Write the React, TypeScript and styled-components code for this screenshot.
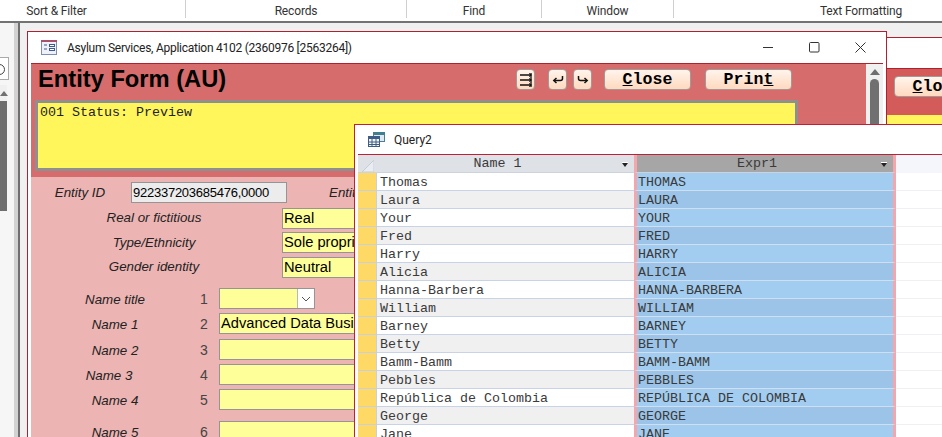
import styled, { createGlobalStyle } from "styled-components";

const GlobalStyle = createGlobalStyle`
  html, body {
    margin: 0;
    padding: 0;
    background: #f1f1f1;
  }
`;

const SANS = `"Liberation Sans", Arial, sans-serif`;
const MONO = `"Liberation Mono", "Courier New", monospace`;
const UI = `Roboto, "Open Sans", sans-serif`;

const Page = styled.div`
  position: relative;
  width: 942px;
  height: 437px;
  overflow: hidden;
  background: #f0f0f0;
  display: flex;
  flex-direction: column;
`;

const Ribbon = styled.div`
  display: flex;
  flex: none;
  height: 21px;
  margin-left: -72px;
  background: #fff;
  border-bottom: 2px solid #737373;
  width: 1200px;
`;

const RibbonGroup = styled.div<{ $w: number }>`
  width: ${(p) => p.$w}px;
  flex: none;
  height: 15px;
  padding-top: 3px;
  box-sizing: content-box;
  border-right: 1px solid #cfcfcf;
  text-align: center;
  font: 12px/17px ${UI};
  letter-spacing: -0.15px;
  color: #333;
`;

const Workspace = styled.div`
  flex: 1;
  display: flex;
  min-height: 0;
`;

const NavPane = styled.div`
  width: 14px;
  flex: none;
  background: #f6f6f6;
  display: flex;
  flex-direction: column;
  padding-top: 34px;
`;

const NavSearch = styled.div`
  width: 9px;
  height: 23px;
  box-sizing: border-box;
  background: #fff;
  border: 1px solid #a9a9a9;
  border-left: none;
  position: relative;
  overflow: hidden;

  &::after {
    content: "";
    position: absolute;
    left: -6px;
    top: 6px;
    width: 9px;
    height: 9px;
    border: 1px solid #444;
    border-radius: 50%;
  }
`;

const NavScroll = styled.div`
  width: 7px;
  margin-top: 5px;
  display: flex;
  flex-direction: column;
  align-items: stretch;
`;

const NavArrow = styled.div`
  height: 16px;
  display: flex;
  align-items: center;
  justify-content: center;
  background: #f0f0f0;

  &::before {
    content: "";
    border: 4px solid transparent;
    border-top: none;
    border-bottom: 5px solid #707070;
  }
`;

const NavThumb = styled.div`
  height: 110px;
  background: #6e6e6e;
`;

const NavEdge = styled.div`
  flex: none;
  width: 4px;
  background: #d2d2d2;
`;

const NavRule = styled.div`
  flex: none;
  width: 2px;
  background: #6f6f6f;
`;

const AppWindow = styled.div<{ $x: number; $y: number; $accent: string }>`
  position: absolute;
  left: ${(p) => p.$x}px;
  top: ${(p) => p.$y}px;
  background: #fff;
  border: 1px solid ${(p) => p.$accent};
  box-sizing: border-box;
  display: flex;
  flex-direction: column;
`;

const BackWindow = styled(AppWindow)`
  width: 120px;
  height: 120px;
`;

const BackBand = styled.div`
  margin-top: 30px;
  height: 47px;
  background: #d35b59;
  border-top: 1px solid #b0202f;
  padding: 7px 0 0 8px;
  box-sizing: border-box;
`;

const BackYellow = styled.div`
  height: 12px;
  background: #fff65c;
`;

const FormWindow = styled(AppWindow)`
  width: 860px;
  height: 440px;
`;

const TitleBar = styled.div<{ $h: number }>`
  flex: none;
  height: ${(p) => p.$h}px;
  display: flex;
  align-items: center;
  padding-left: 13px;
  font: 12px ${UI};
  color: #222;
`;

const TitleText = styled.span<{ $tight?: boolean }>`
  margin-left: 9px;
  flex: 1;
  white-space: nowrap;
  letter-spacing: ${(p) => (p.$tight ? "-0.26px" : "0")};
`;

const WindowControls = styled.div`
  display: flex;
  align-items: center;
  gap: 35px;
  padding-right: 20px;
  color: #333;
`;

const FormFrame = styled.div`
  flex: 1;
  display: flex;
  min-height: 0;
  margin: 0 3px;
  border-top: 1px solid #b0202f;
`;

const FormArea = styled.div`
  flex: 1;
  min-width: 0;
  display: flex;
  flex-direction: column;
`;

const FormHeader = styled.div`
  height: 113px;
  flex: none;
  background: #d66c6b;
  box-sizing: border-box;
  padding-left: 4px;
`;

const HeaderRow = styled.div`
  height: 36px;
  display: flex;
  align-items: center;
  padding: 0 74px 0 3px;
`;

const FormTitle = styled.h1`
  margin: 0;
  font: bold 23.7px ${SANS};
  color: #000;
  flex: 1;
  padding-bottom: 6px;
`;

const HeaderButton = styled.button<{ $w: number; $gap: number }>`
  width: ${(p) => p.$w}px;
  height: 21px;
  margin-left: ${(p) => p.$gap}px;
  margin-bottom: 5px;
  padding: 0;
  border: 1px solid #a39a98;
  border-radius: 4px;
  background: linear-gradient(180deg, #fff4ec 0%, #ffd9bf 100%);
  color: #000;
  font: bold 16.6px/18px ${MONO};
  display: flex;
  align-items: center;
  justify-content: center;
`;

const StatusBox = styled.div`
  width: 763px;
  height: 71px;
  box-sizing: border-box;
  background: #fff65c;
  border: 3px solid #8f8f8f;
  padding: 2px 2px;
  font: 13.33px/16px ${MONO};
  color: #222;
`;

const FormBody = styled.div`
  flex: 1;
  background: #ecb4b3;
  display: flex;
  flex-direction: column;
`;

const BodyRow = styled.div<{ $columns: string; $top: number }>`
  flex: none;
  display: grid;
  grid-template-columns: ${(p) => p.$columns};
  align-items: center;
  height: 21px;
  margin-top: ${(p) => p.$top}px;
`;

const FieldLabel = styled.div<{ $shift?: number; $lift?: number }>`
  text-align: center;
  font: italic 13.33px ${SANS};
  color: #222;
  padding-right: ${(p) => p.$shift || 0}px;
  padding-bottom: ${(p) => p.$lift || 0}px;
  white-space: nowrap;
`;

const NameLabel = styled(FieldLabel)`
  padding-top: 2px;
`;

const SideLabel = styled(FieldLabel)`
  text-align: left;
  margin-left: 42px;
`;

const RowNumber = styled.div`
  text-align: center;
  font: 14px ${SANS};
  color: #444;
`;

const Field = styled.div<{ $tone?: "yellow" | "grey" }>`
  height: 21px;
  box-sizing: border-box;
  border: 1px solid #959595;
  background: ${(p) => (p.$tone === "grey" ? "#ececec" : "#ffff99")};
  font: ${(p) => (p.$tone === "grey" ? "13px/19px" : "14.67px/19px")} ${SANS};
  letter-spacing: ${(p) => (p.$tone === "grey" ? "-0.25px" : "0")};
  color: #000;
  padding-left: 1px;
  white-space: nowrap;
  overflow: hidden;
`;

const ComboField = styled(Field)`
  width: 96px;
  display: flex;
  justify-content: flex-end;
  padding: 0;
`;

const ComboButton = styled.div`
  width: 16px;
  background: #fff;
  border-left: 1px solid #b8b8b8;
  display: flex;
  align-items: center;
  justify-content: center;
  color: #555;
`;

const ScrollTrack = styled.div`
  width: 17px;
  flex: none;
  background: #f0f0f0;
  display: flex;
  flex-direction: column;
  align-items: center;
  padding-top: 3px;
`;

const ScrollUp = styled.div`
  border: 5px solid transparent;
  border-top: none;
  border-bottom: 6px solid #6e6e6e;
  margin-bottom: 4px;
  margin-top: 2px;
`;

const ScrollThumb = styled.div`
  width: 9px;
  height: 120px;
  background: #707070;
  border-radius: 5px 5px 0 0;
`;

const QueryWindow = styled(AppWindow)`
  width: 600px;
  height: 330px;
`;

const Sheet = styled.div`
  flex: 1;
  margin-left: 3px;
  border-top: 1px solid #c01f34;
  display: flex;
  flex-direction: column;
`;

const SheetRow = styled.div`
  display: grid;
  grid-template-columns: 19px 257px 262px 1fr;
  grid-template-rows: 18px;
  height: 18px;
  flex: none;
  font: 13.33px/19px ${MONO};
  color: #3a3a3a;

  & > div {
    box-sizing: border-box;
    min-height: 0;
  }
`;

const SheetHead = styled(SheetRow)`
  line-height: 17px;
`;

const CornerCell = styled.div`
  background: #dee1e6;
  border-bottom: 1px solid #cdd3de;
  display: flex;
  align-items: flex-end;
  justify-content: center;
`;

const HeadCell = styled.div<{ $selected?: boolean }>`
  position: relative;
  text-align: center;
  background: ${(p) => (p.$selected ? "#a6a6a6" : "#dee1e6")};
  border-bottom: 1px solid #cdd3de;
  ${(p) => p.$selected && "border-left: 3px solid #f4a6ac; border-right: 3px solid #f4a6ac;"}
  padding-right: 16px;
`;

const HeadCaret = styled.span`
  position: absolute;
  right: 6px;
  top: 7px;
  border-top: 1px solid #fff;

  &::after {
    content: "";
    display: block;
    border: 3.5px solid transparent;
    border-bottom: none;
    border-top: 4px solid #222;
  }
`;

const HeadFill = styled.div`
  background: #f5f6fb;
`;

const Selector = styled.div`
  background: #ffd966;
  border-right: 1px solid #c7d0df;
  border-bottom: 1px solid #c7d0df;
`;

const NameCell = styled.div<{ $odd: boolean }>`
  background: ${(p) => (p.$odd ? "#f0f0f0" : "#fff")};
  border-bottom: 1px solid #c9d3e6;
  padding-left: 3px;
  white-space: pre;
`;

const ExprCell = styled.div<{ $odd: boolean }>`
  background: ${(p) => (p.$odd ? "#9bc4e8" : "#a3cdf0")};
  border-bottom: 1px solid #cfdff0;
  border-left: 3px solid #f4a6ac;
  border-right: 3px solid #f4a6ac;
  padding-left: 1px;
  white-space: pre;
`;

const EmptyCell = styled.div`
  background: #fff;
  border-bottom: 1px solid #eef0f4;
`;

const FormIcon = () => (
  <svg width="17" height="15" viewBox="0 0 17 15">
    <rect x="0.5" y="0.5" width="15" height="14" fill="#eef1f8" stroke="#7d8db5" />
    <rect x="0" y="0" width="16" height="2" fill="#a8506e" />
    <path d="M3 5h3M3 9h3" stroke="#3f5a8c" strokeWidth="1" />
    <rect x="8.5" y="4.5" width="5" height="2" fill="#fff" stroke="#3f5a8c" />
    <rect x="8.5" y="8.5" width="5" height="2" fill="#fff" stroke="#3f5a8c" />
  </svg>
);

const QueryIcon = () => (
  <svg width="17" height="15" viewBox="0 0 17 15">
    <rect x="5.5" y="0.5" width="11" height="9" fill="#dfe9f2" stroke="#4d7f94" />
    <rect x="5" y="0" width="12" height="3" fill="#3f7f90" />
    <rect x="0.5" y="4.5" width="11" height="10" fill="#f3f6fa" stroke="#3d5c86" />
    <rect x="0" y="4" width="12" height="3" fill="#3d5c86" />
    <path d="M4 7v7M8 7v7M1 10h10M1 12.5h10" stroke="#3d5c86" strokeWidth="1" />
  </svg>
);

const JumpIcon = () => (
  <svg width="14" height="16" viewBox="0 0 14 16" fill="none" stroke="#111" strokeWidth="1.3">
    <path d="M1 3h11M1 8h11M1 13h11M12 1v14" />
    <path d="M10 1.5 12.5 3 10 4.5M10 6.5 12.5 8 10 9.5M10 11.5 12.5 13 10 14.5" strokeWidth="1" />
  </svg>
);

const TurnIcon = ({ flip }: { flip?: boolean }) => (
  <svg width="12" height="10" viewBox="0 0 12 10" fill="none" stroke="#111" strokeWidth="1.5"
       style={flip ? { transform: "scaleX(-1)" } : undefined}>
    <path d="M10.5 1v2.5a2 2 0 0 1-2 2H2" />
    <path d="M4.5 3 1.8 5.5 4.5 8" />
  </svg>
);

const Chevron = () => (
  <svg width="10" height="6" viewBox="0 0 10 6" fill="none" stroke="#555" strokeWidth="1">
    <path d="M1 1l4 4 4-4" />
  </svg>
);

const CornerMark = () => (
  <svg width="12" height="12" viewBox="0 0 12 12">
    <path d="M12 0v12H0z" fill="#e9ecf1" stroke="#c7ccd6" strokeWidth="1" />
  </svg>
);

const MinIcon = () => (
  <svg width="11" height="11" viewBox="0 0 11 11" stroke="#333" fill="none">
    <path d="M0 5.5h10" />
  </svg>
);
const MaxIcon = () => (
  <svg width="11" height="11" viewBox="0 0 11 11" stroke="#333" fill="none">
    <rect x="0.5" y="0.5" width="9.5" height="9.5" rx="1" />
  </svg>
);
const CloseIcon = () => (
  <svg width="11" height="11" viewBox="0 0 11 11" stroke="#333" fill="none">
    <path d="M0.5 0.5l10 10M10.5 0.5l-10 10" />
  </svg>
);

const names: [string, string][] = [
  ["Thomas", "THOMAS"],
  ["Laura", "LAURA"],
  ["Your", "YOUR"],
  ["Fred", "FRED"],
  ["Harry", "HARRY"],
  ["Alicia", "ALICIA"],
  ["Hanna-Barbera", "HANNA-BARBERA"],
  ["William", "WILLIAM"],
  ["Barney", "BARNEY"],
  ["Betty", "BETTY"],
  ["Bamm-Bamm", "BAMM-BAMM"],
  ["Pebbles", "PEBBLES"],
  ["República de Colombia", "REPÚBLICA DE COLOMBIA"],
  ["George", "GEORGE"],
  ["Jane", "JANE"],
];

const TOP_COLS = "246px 5px 300px";
const NAME_COLS = "168px 10px 10px 380px";

export default function App() {
  return (
    <>
      <GlobalStyle />
      <Page>
        <Ribbon>
          <RibbonGroup $w={257}>Sort &amp; Filter</RibbonGroup>
          <RibbonGroup $w={220}>Records</RibbonGroup>
          <RibbonGroup $w={134}>Find</RibbonGroup>
          <RibbonGroup $w={131}>Window</RibbonGroup>
          <RibbonGroup $w={374}>Text Formatting</RibbonGroup>
        </Ribbon>
        <Workspace>
          <NavPane>
            <NavSearch />
            <NavScroll>
              <NavArrow />
              <NavThumb />
            </NavScroll>
          </NavPane>
          <NavEdge />
          <NavRule />
        </Workspace>

        <BackWindow $x={860} $y={37} $accent="#b0202f">
          <BackBand>
            <HeaderButton $w={87} $gap={25}>
              <span><u>C</u>lose</span>
            </HeaderButton>
          </BackBand>
          <BackYellow />
        </BackWindow>

        <FormWindow $x={27} $y={31} $accent="#b0202f">
          <TitleBar $h={31}>
            <FormIcon />
            <TitleText $tight>Asylum Services, Application 4102 (2360976 [2563264])</TitleText>
            <WindowControls>
              <MinIcon />
              <MaxIcon />
              <CloseIcon />
            </WindowControls>
          </TitleBar>
          <FormFrame>
            <FormArea>
              <FormHeader>
                <HeaderRow>
                  <FormTitle>Entity Form (AU)</FormTitle>
                  <HeaderButton $w={19} $gap={0}><JumpIcon /></HeaderButton>
                  <HeaderButton $w={19} $gap={13}><TurnIcon /></HeaderButton>
                  <HeaderButton $w={19} $gap={6}><TurnIcon flip /></HeaderButton>
                  <HeaderButton $w={87} $gap={12}><span><u>C</u>lose</span></HeaderButton>
                  <HeaderButton $w={87} $gap={14}><span>Prin<u>t</u></span></HeaderButton>
                </HeaderRow>
                <StatusBox>001 Status: Preview</StatusBox>
              </FormHeader>
              <FormBody>
                <BodyRow $columns="98px 2px 156px auto" $top={5}>
                  <FieldLabel>Entity ID</FieldLabel>
                  <span />
                  <Field $tone="grey">922337203685476,0000</Field>
                  <SideLabel>Entit</SideLabel>
                </BodyRow>
                <BodyRow $columns={TOP_COLS} $top={5}>
                  <FieldLabel $lift={2}>Real or fictitious</FieldLabel>
                  <span />
                  <Field>Real</Field>
                </BodyRow>
                <BodyRow $columns={TOP_COLS} $top={3}>
                  <FieldLabel $lift={1}>Type/Ethnicity</FieldLabel>
                  <span />
                  <Field>Sole propri</Field>
                </BodyRow>
                <BodyRow $columns={TOP_COLS} $top={4}>
                  <FieldLabel $lift={2}>Gender identity</FieldLabel>
                  <span />
                  <Field>Neutral</Field>
                </BodyRow>
                <BodyRow $columns={NAME_COLS} $top={10}>
                  <NameLabel>Name title</NameLabel>
                  <RowNumber>1</RowNumber>
                  <span />
                  <ComboField>
                    <ComboButton><Chevron /></ComboButton>
                  </ComboField>
                </BodyRow>
                <BodyRow $columns={NAME_COLS} $top={4}>
                  <NameLabel>Name 1</NameLabel>
                  <RowNumber>2</RowNumber>
                  <span />
                  <Field>Advanced Data Busi</Field>
                </BodyRow>
                <BodyRow $columns={NAME_COLS} $top={5}>
                  <NameLabel>Name 2</NameLabel>
                  <RowNumber>3</RowNumber>
                  <span />
                  <Field />
                </BodyRow>
                <BodyRow $columns={NAME_COLS} $top={4}>
                  <NameLabel $shift={12}>Name 3</NameLabel>
                  <RowNumber>4</RowNumber>
                  <span />
                  <Field />
                </BodyRow>
                <BodyRow $columns={NAME_COLS} $top={4}>
                  <NameLabel>Name 4</NameLabel>
                  <RowNumber>5</RowNumber>
                  <span />
                  <Field />
                </BodyRow>
                <BodyRow $columns={NAME_COLS} $top={11}>
                  <NameLabel>Name 5</NameLabel>
                  <RowNumber>6</RowNumber>
                  <span />
                  <Field />
                </BodyRow>
              </FormBody>
            </FormArea>
            <ScrollTrack>
              <ScrollUp />
              <ScrollThumb />
            </ScrollTrack>
          </FormFrame>
        </FormWindow>

        <QueryWindow $x={354} $y={124} $accent="#c01f34">
          <TitleBar $h={29}>
            <QueryIcon />
            <TitleText>Query2</TitleText>
          </TitleBar>
          <Sheet>
            <SheetHead>
              <CornerCell><CornerMark /></CornerCell>
              <HeadCell>Name 1<HeadCaret /></HeadCell>
              <HeadCell $selected>Expr1<HeadCaret /></HeadCell>
              <HeadFill />
            </SheetHead>
            {names.map(([name, upper], i) => (
              <SheetRow key={name}>
                <Selector />
                <NameCell $odd={i % 2 === 1}>{name}</NameCell>
                <ExprCell $odd={i % 2 === 1}>{upper}</ExprCell>
                <EmptyCell />
              </SheetRow>
            ))}
          </Sheet>
        </QueryWindow>
      </Page>
    </>
  );
}
